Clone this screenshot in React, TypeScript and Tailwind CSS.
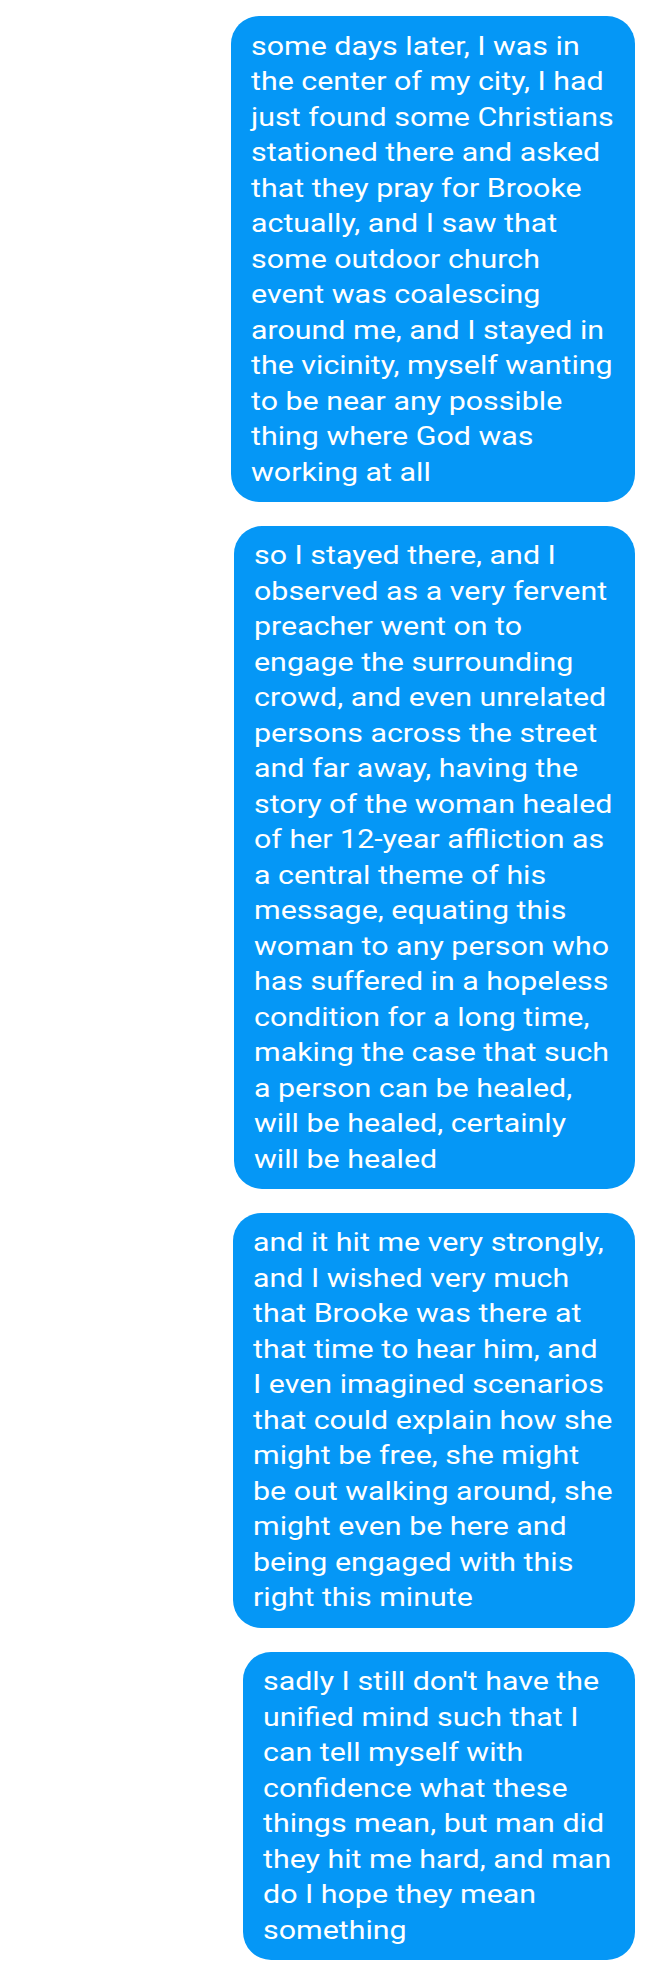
import React from "react";

const bubbles: { w: string; lines: string[] }[] = [
  {
    w: "w-[404px]",
    lines: [
      "some days later, I was in",
      "the center of my city, I had",
      "just found some Christians",
      "stationed there and asked",
      "that they pray for Brooke",
      "actually, and I saw that",
      "some outdoor church",
      "event was coalescing",
      "around me, and I stayed in",
      "the vicinity, myself wanting",
      "to be near any possible",
      "thing where God was",
      "working at all",
    ],
  },
  {
    w: "w-[401px]",
    lines: [
      "so I stayed there, and I",
      "observed as a very fervent",
      "preacher went on to",
      "engage the surrounding",
      "crowd, and even unrelated",
      "persons across the street",
      "and far away, having the",
      "story of the woman healed",
      "of her 12-year affliction as",
      "a central theme of his",
      "message, equating this",
      "woman to any person who",
      "has suffered in a hopeless",
      "condition for a long time,",
      "making the case that such",
      "a person can be healed,",
      "will be healed, certainly",
      "will be healed",
    ],
  },
  {
    w: "w-[402px]",
    lines: [
      "and it hit me very strongly,",
      "and I wished very much",
      "that Brooke was there at",
      "that time to hear him, and",
      "I even imagined scenarios",
      "that could explain how she",
      "might be free, she might",
      "be out walking around, she",
      "might even be here and",
      "being engaged with this",
      "right this minute",
    ],
  },
  {
    w: "w-[392px]",
    lines: [
      "sadly I still don't have the",
      "unified mind such that I",
      "can tell myself with",
      "confidence what these",
      "things mean, but man did",
      "they hit me hard, and man",
      "do I hope they mean",
      "something",
    ],
  },
];

export default function App() {
  return (
    <div
      className="w-[648px] min-h-[1978px] bg-white flex flex-col items-end gap-[23.7px] pt-[16px] pb-[18px] pr-[13px]"
      style={{ fontFamily: "Roboto, 'Noto Sans', sans-serif" }}
    >
      {bubbles.map((b, i) => (
        <div
          key={i}
          className={`${b.w} bg-[#0597f6] text-white rounded-[28px] pl-[20px] pr-[14px] pt-[12.5px] pb-[12px] text-[25px] leading-[35.5px]`}
        >
          {b.lines.map((l, j) => (
            <div key={j} className="w-fit whitespace-nowrap origin-left scale-x-[1.215]">
              {l}
            </div>
          ))}
        </div>
      ))}
    </div>
  );
}
